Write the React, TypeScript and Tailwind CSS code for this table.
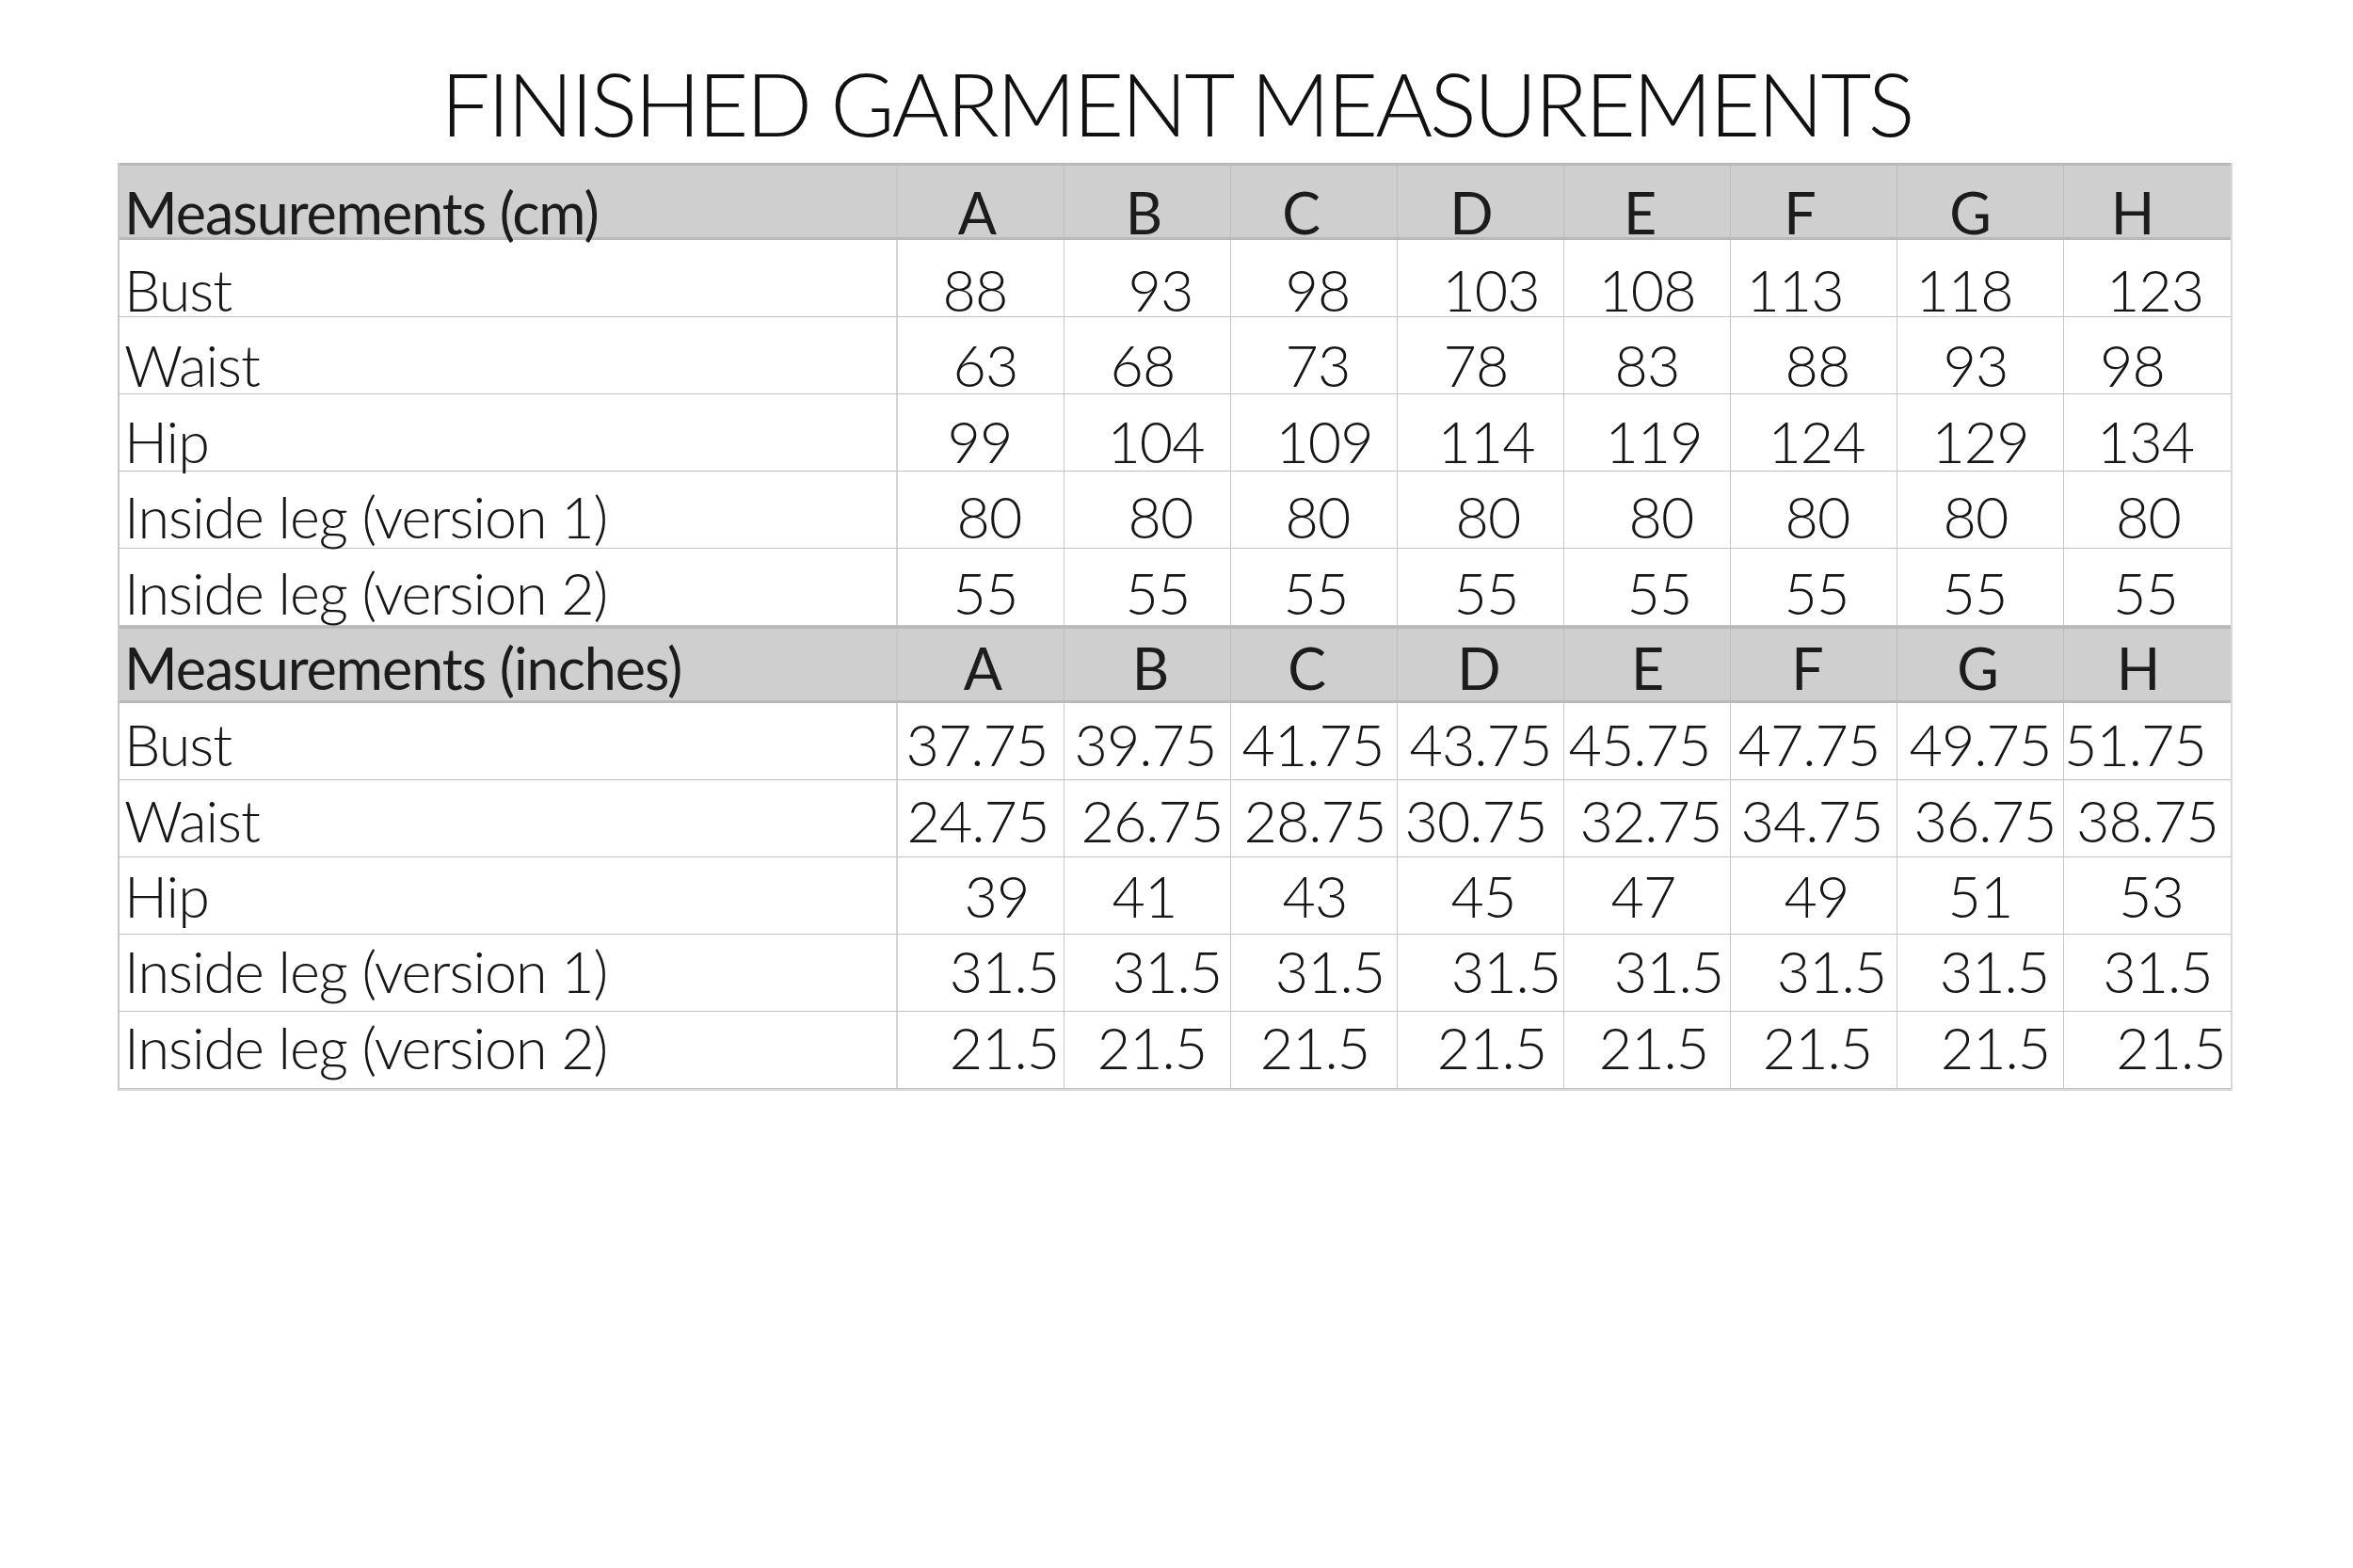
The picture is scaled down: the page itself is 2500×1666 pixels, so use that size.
import React from 'react';

type Row = { label: string; values: string[]; shift: number[]; pb: string };
type Section = { title: string; pb: string; shift: number[]; rows: Row[] };

const sizes = ['A', 'B', 'C', 'D', 'E', 'F', 'G', 'H'];

// shift = how far each figure sits off the cell centre in the printed chart
const sections: Section[] = [
  {
    title: 'Measurements (cm)',
    pb: 'pb-0',
    shift: [-4, -4, -14, -10, -8, -15, -11, -16],
    rows: [
      { label: 'Bust', values: ['88', '93', '98', '103', '108', '113', '118', '123'], shift: [-6, 14, 4, 11, 0, -20, -17, 8], pb: 'pb-[2px]' },
      { label: 'Waist', values: ['63', '68', '73', '78', '83', '88', '93', '98'], shift: [5, -5, 4, -5, 0, 4, -5, -16], pb: 'pb-[4px]' },
      { label: 'Hip', values: ['99', '104', '109', '114', '119', '124', '129', '134'], shift: [-1, 9, 11, 6, 7, 3, 0, -2], pb: 'pb-[5px]' },
      { label: 'Inside leg (version 1)', values: ['80', '80', '80', '80', '80', '80', '80', '80'], shift: [9, 14, 4, 8, 15, 4, -5, 1], pb: 'pb-[7px]' },
      { label: 'Inside leg (version 2)', values: ['55', '55', '55', '55', '55', '55', '55', '55'], shift: [5, 11, 2, 6, 13, 3, -6, -2], pb: 'pb-[8px]' },
    ],
  },
  {
    title: 'Measurements (inches)',
    pb: 'pb-[8px]',
    shift: [2, 3, -8, -2, 0, -7, -3, -10],
    rows: [
      { label: 'Bust', values: ['37.75', '39.75', '41.75', '43.75', '45.75', '47.75', '49.75', '51.75'], shift: [-4, -2, -1, 0, -8, -5, 0, -13], pb: 'pb-[11px]' },
      { label: 'Waist', values: ['24.75', '26.75', '28.75', '30.75', '32.75', '34.75', '36.75', '38.75'], shift: [-3, 5, 1, -5, 4, -2, 5, 0], pb: 'pb-[12px]' },
      { label: 'Hip', values: ['39', '41', '43', '45', '47', '49', '51', '53'], shift: [17, -3, 1, 3, -4, 3, 0, 4], pb: 'pb-[14px]' },
      { label: 'Inside leg (version 1)', values: ['31.5', '31.5', '31.5', '31.5', '31.5', '31.5', '31.5', '31.5'], shift: [25, 21, 17, 27, 23, 19, 15, 11], pb: 'pb-[16px]' },
      { label: 'Inside leg (version 2)', values: ['21.5', '21.5', '21.5', '21.5', '21.5', '21.5', '21.5', '21.5'], shift: [25, 5, 1, 12, 7, 4, 16, 25], pb: 'pb-[17px]' },
    ],
  },
];

const rowGrid = 'grid grid-cols-[827px_repeat(8,177px)] h-[82px]';

const HeaderRow = ({ s }: { s: Section }) => (
  <div className={`${rowGrid} bg-[#cfcfcf] border-y-[3px] border-[#b9b9b9] text-[#1c1c1c]`}>
    <div className={`flex items-end pl-[5px] border-r-2 border-[#c9c9c9] whitespace-nowrap ${s.pb}`}>{s.title}</div>
    {sizes.map((c, i) => (
      <div key={c} className={`flex items-end justify-center ${s.pb} ${i < 7 ? 'border-r border-[#bdbdbd]' : ''}`}>
        <span style={{ transform: `translateX(${s.shift[i]}px)` }}>{c}</span>
      </div>
    ))}
  </div>
);

const BodyRow = ({ r }: { r: Row }) => (
  <div className={`${rowGrid} border-b border-[#c2c2c2] font-light text-[#161616]`}>
    <div className={`flex items-end pl-[5px] border-r-2 border-[#d4d4d4] whitespace-nowrap ${r.pb}`}>{r.label}</div>
    {r.values.map((v, i) => (
      <div key={i} className={`flex items-end justify-center whitespace-nowrap ${r.pb} ${i < 7 ? 'border-r border-[#c6c6c6]' : ''}`}>
        <span style={{ transform: `translateX(${r.shift[i]}px)` }}>{v}</span>
      </div>
    ))}
  </div>
);

export default function App() {
  return (
    <div className="w-[2500px] h-[1666px] bg-white [font-family:Lato,'Open_Sans',sans-serif]">
      <h1 className="pt-[63px] text-center text-[93px] leading-none font-light tracking-[-3px] text-[#111]">
        FINISHED GARMENT MEASUREMENTS
      </h1>

      <div className="mt-[17px] ml-[125px] w-[2247px] border-x-2 border-l-[#c8c8c8] border-r-[#d9d9d9] border-b-2 border-b-[#d9d9d9] text-[61px] leading-[0.86] tracking-[-1px]">
        {sections.map((s) => (
          <div key={s.title}>
            <HeaderRow s={s} />
            {s.rows.map((r) => (
              <BodyRow key={r.label} r={r} />
            ))}
          </div>
        ))}
      </div>
    </div>
  );
}
